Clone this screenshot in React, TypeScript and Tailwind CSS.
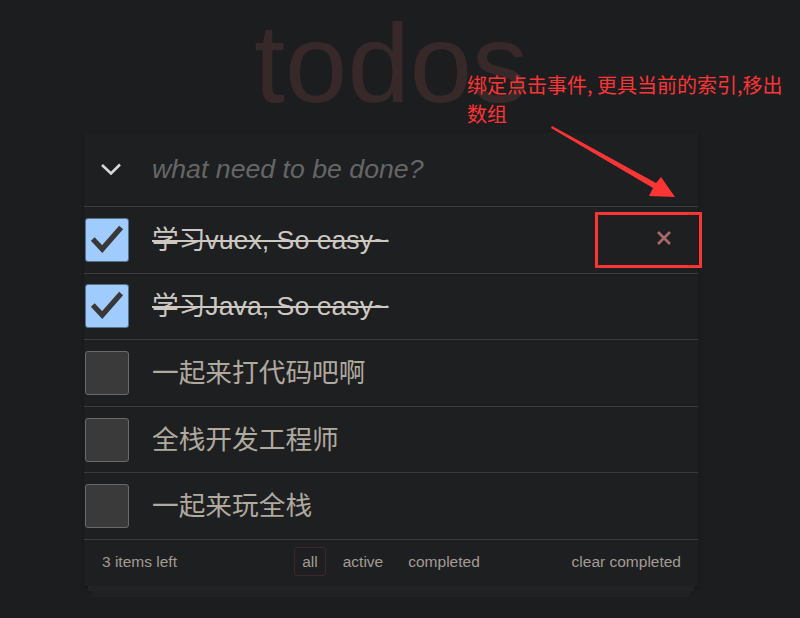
import React from "react";

type Todo = { title: string; done: boolean };

const todos: Todo[] = [
  { title: "学习vuex, So easy~", done: true },
  { title: "学习Java, So easy~", done: true },
  { title: "一起来打代码吧啊", done: false },
  { title: "全栈开发工程师", done: false },
  { title: "一起来玩全栈", done: false },
];

function Check({ done }: { done: boolean }) {
  if (done) {
    return (
      <div className="w-[44px] h-[44px] shrink-0 rounded-[3px] bg-[#9fcbff] border border-[#56708f] flex items-center justify-center">
        <svg width="44" height="44" viewBox="0 0 44 44">
          <path d="M9 23 L17 31.5 L35 11" fill="none" stroke="#383838" strokeWidth="5.5" strokeLinecap="square" strokeLinejoin="miter" />
        </svg>
      </div>
    );
  }
  return <div className="w-[44px] h-[44px] shrink-0 rounded-[3px] bg-[#3a3a3a] border border-[#6a6a6a]" />;
}

export default function App() {
  return (
    <div
      className="relative min-h-[618px] bg-[#1c1d1f] overflow-hidden"
      style={{ fontFamily: '"Liberation Sans", Arial, "Noto Sans CJK SC", sans-serif' }}
    >
      <div className="w-[614px] ml-[84px]">
        <h1 className="h-[133px] pt-[8px] text-center text-[112px] leading-[112px] font-normal text-[#37292a]">
          todos
        </h1>
        <section className="bg-[#1e1f21] shadow-[0_2px_4px_rgba(0,0,0,0.25)]">
          <div className="h-[74px] flex items-center border-b border-[#3a3b3d]">
            <div className="w-[53px] shrink-0 flex justify-center">
              <svg width="22" height="13" viewBox="0 0 22 13">
                <path d="M2 2 L11 10.5 L20 1.5" fill="none" stroke="#d8d8d8" strokeWidth="2.6" />
              </svg>
            </div>
            <span className="ml-[15px] text-[26.7px] italic text-[#666666]">what need to be done?</span>
          </div>
          {todos.map((t, i) => (
            <div key={i} className="h-[66.6px] flex items-center border-b border-[#3a3b3d] pl-px">
              <Check done={t.done} />
              <span
                className={
                  "ml-[23px] text-[26.7px] " +
                  (t.done ? "text-[#cdc8c1] line-through decoration-[#cdc8c1] decoration-[2px]" : "text-[#b0a99f]")
                }
              >
                {t.title}
              </span>
              {i === 0 && (
                <div className="ml-auto mr-[14px] mb-[4px] w-[40px] h-[40px] flex items-center justify-center">
                  <svg width="16" height="16" viewBox="0 0 16 16">
                    <path d="M2 2 L14 14 M14 2 L2 14" stroke="#a86a6a" strokeWidth="2.6" />
                  </svg>
                </div>
              )}
            </div>
          ))}
          <div className="h-[46px] pb-[3px] grid grid-cols-[1fr_auto_1fr] items-center text-[15.5px] text-[#a39c92]">
            <span className="pl-[18px]">3 items left</span>
            <div className="flex gap-[8px]">
              <span className="px-[7.5px] py-[2px] rounded-[3px] border border-[#43262a]">all</span>
              <span className="px-[7.5px] py-[2px] rounded-[3px] border border-transparent">active</span>
              <span className="px-[7.5px] py-[2px] rounded-[3px] border border-transparent">completed</span>
            </div>
            <span className="justify-self-end pr-[17px]">clear completed</span>
          </div>
        </section>
        <div className="mx-[4px] h-[5px] bg-[#222325]" />
        <div className="mx-[8px] h-[6px] bg-[#202123]" />
      </div>

      {/* annotation */}
      <div
        className="absolute left-[467px] top-[70px] text-[20px] leading-[29px] text-[#ff3434] whitespace-nowrap"
        style={{ fontFamily: '"Noto Sans CJK SC", "Liberation Sans", sans-serif' }}
      >
        绑定点击事件, 更具当前的索引,移出
        <br />
        数组
      </div>
      <div className="absolute left-[595px] top-[212px] w-[107px] h-[56px] border-[3px] border-[#ff3434]" />
      <svg className="absolute left-0 top-0" width="800" height="618" viewBox="0 0 800 618">
        <polygon points="552,126 656,183 661,177 675,197 649,196 653,188 551,128" fill="#ff3434" />
      </svg>
    </div>
  );
}
